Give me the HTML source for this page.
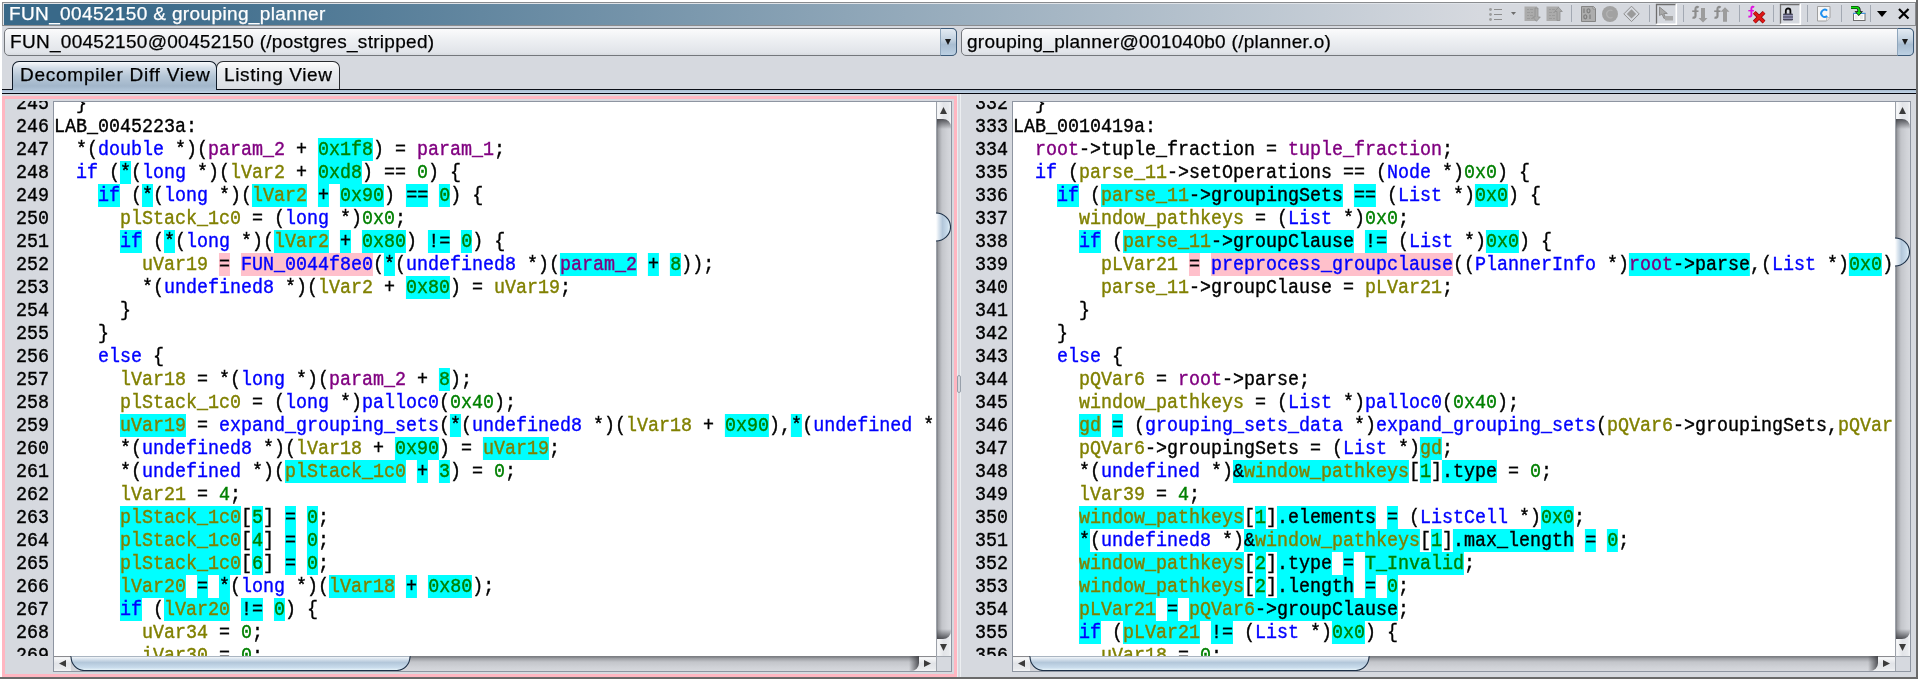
<!DOCTYPE html>
<html><head><meta charset="utf-8">
<style>
*{box-sizing:border-box;margin:0;padding:0}
html,body{width:1918px;height:679px;overflow:hidden;background:#d6d9df;position:relative}
.a{position:absolute;will-change:transform}
.sans{font-family:"Liberation Sans",sans-serif}
.mono{font-family:"Liberation Mono",monospace;-webkit-text-stroke:0.4px}
/* frame */
#wtop{left:0;top:0;width:1916px;height:2px;background:#fff}
#wleft{left:0;top:0;width:2px;height:679px;background:#fff}
#wright{left:1916px;top:0;width:2px;height:679px;background:#6a6a6a}
#wbot{left:0;top:677px;width:1918px;height:2px;background:#6a6a6a}
/* title */
#title{left:2px;top:2px;width:1914px;height:24px;border:1px solid #8a8c8f;box-shadow:inset 1px 1px 0 #dfe3e8;
  background:linear-gradient(to right,#396989 0px,#396989 113px,#d6d9df 1477px,#d6d9df 100%)}
#title .t{left:5.6px;top:0px;font-size:19px;line-height:22px;color:#fff;letter-spacing:0.37px;white-space:pre;-webkit-text-stroke:0.25px #fff}
/* combos */
.combo{top:28px;height:28px;border:1px solid #74777c;border-radius:5px;
  background:linear-gradient(#fbfbfc,#eef0f3 40%,#e1e4e9 90%,#d8dbe0)}
.combo .t{left:4.5px;top:3px;-webkit-text-stroke:0.25px #000;font-size:19px;line-height:20px;color:#000;white-space:pre}
.combo .btn{right:-1px;top:-1px;width:17px;height:28px;border:1px solid #3c5a78;border-left-color:#8fa6bc;border-radius:0 5px 5px 0;
  background:linear-gradient(#e3ebf3,#c4d3e1 40%,#a8bdd1 60%,#bcd0e3)}
.combo .btn i{position:absolute;left:4px;top:10px;width:0;height:0;border-left:3.5px solid transparent;border-right:3.5px solid transparent;border-top:6px solid #1a1a1a}
/* tabs */
#tabline{left:2px;top:89px;width:1914px;height:1px;background:#0b0e16}
#tabband{left:2px;top:90px;width:1914px;height:3px;background:linear-gradient(#a9bcd0,#c2d5e8)}
#tabdark{left:2px;top:93px;width:1914px;height:1px;background:#06070f}
.tab{top:61px;height:29px;border:1px solid #0f1a28;border-bottom:none;border-radius:7px 7px 0 0}
#tab1{left:12px;width:205px;background:linear-gradient(#f7f9fb 0px,#d3dde8 6px,#b6c7d7 14px,#a2b6ca 24px,#b2c6da 29px)}
#tab2{left:216px;width:124px;border-color:#2a2c30;background:linear-gradient(#fdfdfd 0px,#eceef1 8px,#e0e3e8 20px,#d9dce1 28px);height:28px}
.tab .t{left:6.5px;top:3px;-webkit-text-stroke:0.25px #000;font-size:19px;line-height:20px;color:#000;white-space:pre}
/* panels */
.pink{left:2px;top:96px;width:955px;height:581px;border:3px solid #ffb6c1}
.sbox{top:101px;width:899px;height:571px;border:1px solid #8e95a1;background:#fff}
.ln{top:101px;width:46px;height:555px;overflow:hidden;font-size:18.33px;line-height:23px;text-align:right;color:#000}
.ln .in{position:absolute;right:0;top:-9px;width:100%;font-size:20px;transform:scaleX(0.916528);transform-origin:100% 0}
.ln .in div{height:23px}
.code{top:102px;width:881px;height:554px;overflow:hidden;font-size:18.33px;line-height:23px;color:#000;background:#fff;white-space:pre}
.code .in{position:absolute;left:0;top:-10px;font-size:20px;transform:scaleX(0.916528);transform-origin:0 0}
.code div{height:23px}
u{text-decoration:none;display:inline-block;height:23px;vertical-align:top}
u.h{background:#00ffff}
u.k{background:#ffc0cb}
i{font-style:normal}
i.b{color:#0000ff}
i.o{color:#808000}
i.p{color:#800080}
i.g{color:#008000}
/* scrollbars */
.vs{top:102px;width:15px;height:554px;background:linear-gradient(to right,#8d8f94,#b9bbc0 3px,#cfd1d6 8px,#d6d9df)}
.hs{top:656px;width:882px;height:15px;background:linear-gradient(#707276,#a9abb0 3px,#cdd0d5 8px,#d6d9df)}
.corner{top:656px;width:15px;height:15px;background:#d6d9df;border-left:1px solid #a3a8b0;border-top:1px solid #a3a8b0}
.thumbH{top:656px;height:15px;border:1px solid #1b2f48;border-radius:14px/8px;
  background:linear-gradient(#fafcfd,#c9d6e3 25%,#a8bdd1 50%,#c2d7ea 80%,#eaf7fc)}
.thumbV{width:15px;height:29px;border:1px solid #1b2f48;border-left:none;border-radius:0 15px 15px 0/0 14px 14px 0;
  background:linear-gradient(to right,#fafcfd,#c9d6e3 25%,#a8bdd1 50%,#c2d7ea 80%,#eaf7fc)}
.arr{background:linear-gradient(to right,#fbfbfc,#e4e6ea)}
.arrh{background:linear-gradient(#fbfbfc,#e4e6ea)}
.tri-up{width:0;height:0;border-left:4px solid transparent;border-right:4px solid transparent;border-bottom:7px solid #333}
.tri-dn{width:0;height:0;border-left:4px solid transparent;border-right:4px solid transparent;border-top:7px solid #333}
.tri-l{width:0;height:0;border-top:4px solid transparent;border-bottom:4px solid transparent;border-right:7px solid #333}
.tri-r{width:0;height:0;border-top:4px solid transparent;border-bottom:4px solid transparent;border-left:7px solid #333}
/* toolbar */
.sep{top:5px;width:1px;height:17px;background:#a3a9b3}
.tog{top:4px;width:21px;height:21px;border-top:1px solid #707070;border-left:1px solid #707070;border-right:2px solid #fff;border-bottom:2px solid #fff}
</style></head>
<body class="sans">
<div class="a" id="wtop"></div><div class="a" id="wleft"></div>
<div class="a" id="wright"></div><div class="a" id="wbot"></div>

<div class="a" id="title"><div class="a t">FUN_00452150 &amp; grouping_planner</div></div>

<!-- toolbar icons -->
<svg class="a" style="left:1480px;top:2px" width="436" height="24" viewBox="1480 2 436 24">
  <g fill="#9d9d9d"><circle cx="1490.5" cy="9.5" r="1.4"/><circle cx="1490.5" cy="14.5" r="1.4"/><circle cx="1490.5" cy="19.5" r="1.4"/></g>
  <g stroke="#8d8d8d" stroke-width="1"><path d="M1494 9.5h8M1494 14.5h8M1494 19.5h8"/></g>
  <path d="M1511 12h5l-2.5 3z" fill="#6d6d6d"/>
  <!-- doc down -->
  <rect x="1524.5" y="6.5" width="12.5" height="14.5" fill="#ababab"/>
  <g stroke="#999" stroke-width="0.9"><path d="M1527 9.5h2M1530 9.5h3M1527 12.5h3M1531 12.5h2M1527 15.5h2M1530 15.5h3M1527 18.5h3M1531 18.5h2"/></g>
  <path d="M1535 8h3v9h2.3l-3.8 4.3-3.8-4.3h2.3z" fill="#a9a9a9" stroke="#8f8f8f" stroke-width="0.8"/>
  <!-- doc up -->
  <rect x="1546.5" y="6.5" width="12.5" height="14.5" fill="#ababab"/>
  <g stroke="#999" stroke-width="0.9"><path d="M1549 9.5h2M1552 9.5h3M1549 12.5h3M1553 12.5h2M1549 15.5h2M1552 15.5h3M1549 18.5h3M1553 18.5h2"/></g>
  <path d="M1557 20.5v-9h-2.3l3.8-4.3 3.8 4.3h-2.3v9z" fill="#a9a9a9" stroke="#8f8f8f" stroke-width="0.8"/>
  <rect x="1571" y="5" width="1" height="17" fill="#a3a9b3"/>
  <!-- binary doc -->
  <path d="M1581.5 6.5h12l2 2v13h-14z" fill="#adadad" stroke="#858585" stroke-width="1"/>
  <path d="M1593 6.5v2.5h2.5" fill="#d0d0d0" stroke="#858585" stroke-width=".8"/>
  <g fill="none" stroke="#808080" stroke-width="1.3">
    <path d="M1584 8.5v4.5"/><ellipse cx="1588.5" cy="10.8" rx="1.5" ry="2"/>
    <ellipse cx="1585.3" cy="16.8" rx="1.5" ry="2"/><path d="M1590 14.5v4.5"/>
  </g>
  <!-- circle -->
  <circle cx="1610" cy="14" r="8" fill="#a2a2a2"/>
  <path d="M1612.5 10.8a3.8 3.8 0 1 0 0 6.4" stroke="#b2b2b2" stroke-width="1.3" fill="none"/>
  <!-- diamond -->
  <path d="M1631.5 6.2l7.7 7.7-7.7 7.7-7.7-7.7z" fill="none" stroke="#8e8e8e" stroke-width="1"/>
  <path d="M1631.5 9.2l4.7 4.7-4.7 4.7-4.7-4.7z" fill="#9a9a9a"/>
  <rect x="1649" y="5" width="1" height="17" fill="#a3a9b3"/>
  <!-- toggle cursor -->
  <rect x="1656" y="4" width="20" height="20" fill="#d6d9df"/>
  <path d="M1656.5 24v-19.5h19.5" stroke="#6e6e6e" stroke-width="1.3" fill="none"/>
  <path d="M1676.3 4v20.3h-20" stroke="#ffffff" stroke-width="1.6" fill="none"/>
  <path d="M1659.5 7v8.5l2.5-1.5 2 4.5 1.5-.8-1.7-4.2h3.5z" fill="#a8a8a8" stroke="#878787" stroke-width=".9"/>
  <rect x="1665" y="16" width="8" height="4.5" fill="#a8a8a8"/>
  <rect x="1683" y="5" width="1" height="17" fill="#a3a9b3"/>
  <!-- f down / f up -->
  <g fill="none" stroke="#8c8c8c">
    <path d="M1698.5 7.6c-1-1-3-1.2-3 1.4v7c0 1.5-1.3 2-3 1.5" stroke-width="2.2"/>
    <path d="M1692.2 11.2h6.3" stroke-width="1.6"/>
    <path d="M1720.5 7.6c-1-1-3-1.2-3 1.4v7c0 1.5-1.3 2-3 1.5" stroke-width="2.2"/>
    <path d="M1714.2 11.2h6.3" stroke-width="1.6"/>
  </g>
  <path d="M1701 8h4v10h2.5l-4.5 4.4-4.5-4.4h2.5z" fill="#9c9c9c"/>
  <path d="M1723 21.7v-10h-2.5l4.5-4.5 4.5 4.5h-2.5v10z" fill="#9c9c9c"/>
  <rect x="1739" y="5" width="1" height="17" fill="#a3a9b3"/>
  <!-- f x -->
  <g fill="none" stroke="#e010e0">
    <path d="M1754 7.3c-.8-.9-2.6-1-2.6 1.2v6.7c0 1.3-1.2 1.7-3 1.3" stroke-width="1.9"/>
    <path d="M1748.3 10.7h5.6" stroke-width="1.4"/>
  </g>
  <path d="M1754.3 12.3l9.7 9.7M1764 12.3l-9.7 9.7" stroke="#8a0a0a" stroke-width="4"/>
  <path d="M1754.3 12.3l9.7 9.7M1764 12.3l-9.7 9.7" stroke="#e01818" stroke-width="2.6"/>
  <rect x="1773" y="5" width="1" height="17" fill="#a3a9b3"/>
  <!-- toggle lock -->
  <rect x="1780" y="4" width="20" height="20" fill="#d6d9df"/>
  <path d="M1780.5 24v-19.5h19.5" stroke="#6e6e6e" stroke-width="1.3" fill="none"/>
  <path d="M1800.3 4v20.3h-20" stroke="#ffffff" stroke-width="1.6" fill="none"/>
  <path d="M1785.8 14v-3.2a2.3 2.3 0 0 1 4.6 0v3.2" stroke="#0a0a0a" stroke-width="1.8" fill="none"/>
  <rect x="1783" y="13.5" width="10" height="7" rx="1.2" fill="#4a4a5e"/>
  <path d="M1783 15.8h10M1783 18.2h10" stroke="#c0c0e8" stroke-width=".9"/>
  <rect x="1807" y="5" width="1" height="17" fill="#a3a9b3"/>
  <!-- C doc -->
  <path d="M1817.5 6.5h12.5v11l-3.5 3.5h-9z" fill="#f6f6f6" stroke="#a0a0a0" stroke-width="1"/>
  <path d="M1826.5 21v-3.5h3.5" fill="#e0e0e0" stroke="#b0b0b0" stroke-width=".7"/>
  <path d="M1827.2 10.6a3.6 3.6 0 1 0 0 5.4" stroke="#1e90f0" stroke-width="1.9" fill="none"/>
  <rect x="1841" y="5" width="1" height="17" fill="#a3a9b3"/>
  <!-- green arrow doc -->
  <rect x="1853.5" y="13.5" width="11.5" height="7" fill="#fcfcfc" stroke="#6e6e6e" stroke-width="1"/>
  <path d="M1853 13.3h12.5" stroke="#3a9cf0" stroke-width="1"/>
  <g stroke="#c8c8c8" stroke-width=".7"><path d="M1855 16h2.5M1860 16h3M1855 18h2.5M1860 18h3"/></g>
  <path d="M1851 7.5h5.5a2.5 2.5 0 0 1 2.5 2.5v1.5" stroke="#000" stroke-width="3.2" fill="none"/>
  <path d="M1854.5 11.3h8.5l-4.25 4.7z" fill="#000"/>
  <path d="M1851 7.5h5.5a2.5 2.5 0 0 1 2.5 2.5v2" stroke="#10e010" stroke-width="1.8" fill="none"/>
  <path d="M1856 12h5.5l-2.75 3.2z" fill="#10e010"/>
  <rect x="1870" y="5" width="1" height="17" fill="#a3a9b3"/>
  <!-- dropdown + close -->
  <path d="M1877 11h10l-5 6z" fill="#000"/>
  <path d="M1899 9l9.5 9.5M1908.5 9l-9.5 9.5" stroke="#000" stroke-width="2.2"/>
</svg>

<div class="a combo" style="left:4px;width:953px"><div class="a t" style="letter-spacing:0.29px">FUN_00452150@00452150 (/postgres_stripped)</div><div class="a btn"><i></i></div></div>
<div class="a combo" style="left:961px;width:953px"><div class="a t" style="letter-spacing:0.29px">grouping_planner@001040b0 (/planner.o)</div><div class="a btn"><i></i></div></div>

<div class="a" id="tabline"></div>
<div class="a" id="tabband"></div>
<div class="a" id="tabdark"></div>
<div class="a tab" id="tab2"><div class="a t" style="left:7.4px;letter-spacing:0.63px">Listing View</div></div>
<div class="a tab" id="tab1"><div class="a t" style="letter-spacing:0.74px">Decompiler Diff View</div></div>

<!-- LEFT PANEL -->
<div class="a pink"></div>
<div class="a sbox" style="left:53px"></div>
<div class="a ln mono" style="left:3px"><div class="in"><div>245</div>
<div>246</div>
<div>247</div>
<div>248</div>
<div>249</div>
<div>250</div>
<div>251</div>
<div>252</div>
<div>253</div>
<div>254</div>
<div>255</div>
<div>256</div>
<div>257</div>
<div>258</div>
<div>259</div>
<div>260</div>
<div>261</div>
<div>262</div>
<div>263</div>
<div>264</div>
<div>265</div>
<div>266</div>
<div>267</div>
<div>268</div>
<div>269</div></div></div>
<div class="a code mono" style="left:54px"><div class="in"><div>  }</div><div>LAB_0045223a:</div><div>  *(<i class="b">double</i> *)(<i class="p">param_2</i> + <u class="h"><i class="g">0x1f8</i></u>) = <i class="p">param_1</i>;</div><div>  <i class="b">if</i> (<u class="h">*</u>(<i class="b">long</i> *)(<i class="o">lVar2</i> + <u class="h"><i class="g">0xd8</i></u>) == <i class="g">0</i>) {</div><div>    <u class="h"><i class="b">if</i></u> (<u class="h">*</u>(<i class="b">long</i> *)(<u class="h"><i class="o">lVar2</i></u> <u class="h">+</u> <u class="h"><i class="g">0x90</i></u>) <u class="h">==</u> <u class="h"><i class="g">0</i></u>) {</div><div>      <i class="o">plStack_1c0</i> = (<i class="b">long</i> *)<i class="g">0x0</i>;</div><div>      <u class="h"><i class="b">if</i></u> (<u class="h">*</u>(<i class="b">long</i> *)(<u class="h"><i class="o">lVar2</i></u> <u class="h">+</u> <u class="h"><i class="g">0x80</i></u>) <u class="h">!=</u> <u class="h"><i class="g">0</i></u>) {</div><div>        <i class="o">uVar19</i> <u class="k">=</u> <u class="k"><i class="b">FUN_0044f8e0</i></u>(<u class="h">*</u>(<i class="b">undefined8</i> *)(<u class="h"><i class="p">param_2</i></u> <u class="h">+</u> <u class="h"><i class="g">8</i></u>));</div><div>        *(<i class="b">undefined8</i> *)(<i class="o">lVar2</i> + <u class="h"><i class="g">0x80</i></u>) = <i class="o">uVar19</i>;</div><div>      }</div><div>    }</div><div>    <i class="b">else</i> {</div><div>      <i class="o">lVar18</i> = *(<i class="b">long</i> *)(<i class="p">param_2</i> + <u class="h"><i class="g">8</i></u>);</div><div>      <i class="o">plStack_1c0</i> = (<i class="b">long</i> *)<i class="b">palloc0</i>(<i class="g">0x40</i>);</div><div>      <u class="h"><i class="o">uVar19</i></u> = <i class="b">expand_grouping_sets</i>(<u class="h">*</u>(<i class="b">undefined8</i> *)(<i class="o">lVar18</i> + <u class="h"><i class="g">0x90</i></u>),<u class="h">*</u>(<i class="b">undefined</i> *)(<i class="o">lVar18</i> + <i class="g">0x80</i>));</div><div>      *(<i class="b">undefined8</i> *)(<i class="o">lVar18</i> + <u class="h"><i class="g">0x90</i></u>) = <u class="h"><i class="o">uVar19</i></u>;</div><div>      *(<i class="b">undefined</i> *)(<u class="h"><i class="o">plStack_1c0</i></u> <u class="h">+</u> <u class="h"><i class="g">3</i></u>) = <i class="g">0</i>;</div><div>      <i class="o">lVar21</i> = <i class="g">4</i>;</div><div>      <u class="h"><i class="o">plStack_1c0</i></u>[<u class="h"><i class="g">5</i></u>] <u class="h">=</u> <u class="h"><i class="g">0</i></u>;</div><div>      <u class="h"><i class="o">plStack_1c0</i></u>[<u class="h"><i class="g">4</i></u>] <u class="h">=</u> <u class="h"><i class="g">0</i></u>;</div><div>      <u class="h"><i class="o">plStack_1c0</i></u>[<u class="h"><i class="g">6</i></u>] <u class="h">=</u> <u class="h"><i class="g">0</i></u>;</div><div>      <u class="h"><i class="o">lVar20</i></u> <u class="h">=</u> <u class="h">*</u>(<i class="b">long</i> *)(<u class="h"><i class="o">lVar18</i></u> <u class="h">+</u> <u class="h"><i class="g">0x80</i></u>);</div><div>      <u class="h"><i class="b">if</i></u> (<u class="h"><i class="o">lVar20</i></u> <u class="h">!=</u> <u class="h"><i class="g">0</i></u>) {</div><div>        <i class="o">uVar34</i> = <i class="g">0</i>;</div><div>        <i class="o">iVar30</i> = <i class="g">0</i>;</div></div></div>
<svg class="a" style="left:936px;top:102px" width="15" height="554" viewBox="0 0 15 554">
<defs>
<linearGradient id="vtL" x1="0" x2="1" y1="0" y2="0"><stop offset="0" stop-color="#616368"/><stop offset=".15" stop-color="#9b9da2"/><stop offset=".4" stop-color="#c3c5ca"/><stop offset=".75" stop-color="#d0d2d7"/><stop offset="1" stop-color="#d6d8dd"/></linearGradient>
<linearGradient id="vttL" x1="0" x2="0" y1="0" y2="1"><stop offset="0" stop-color="#3c3d42" stop-opacity=".85"/><stop offset="1" stop-color="#3c3d42" stop-opacity="0"/></linearGradient>
<linearGradient id="vtbL" x1="0" x2="0" y1="1" y2="0"><stop offset="0" stop-color="#3c3d42" stop-opacity=".85"/><stop offset="1" stop-color="#3c3d42" stop-opacity="0"/></linearGradient>
<linearGradient id="vbL" x1="0" x2="1" y1="0" y2="0"><stop offset="0" stop-color="#e9eaed"/><stop offset=".15" stop-color="#f6f7f8"/><stop offset=".5" stop-color="#e2e4e8"/><stop offset=".85" stop-color="#e8eaed"/><stop offset="1" stop-color="#f4f5f7"/></linearGradient>
<linearGradient id="vthL" x1="0" x2="1" y1="0" y2="0"><stop offset="0" stop-color="#ffffff"/><stop offset=".2" stop-color="#d9e4ee"/><stop offset=".45" stop-color="#b3c7da"/><stop offset=".8" stop-color="#c9dcec"/><stop offset="1" stop-color="#ecf8fc"/></linearGradient>
</defs>
<rect x="0" y="0" width="15" height="554" fill="url(#vtL)"/>
<rect x="0" y="17" width="15" height="10" fill="url(#vttL)"/>
<rect x="0" y="527" width="15" height="10" fill="url(#vtbL)"/>
<path d="M0 0H15V25A8 8 0 0 0 7 17H0Z" fill="url(#vbL)"/>
<path d="M0 554H15V529A8 8 0 0 1 7 537H0Z" fill="url(#vbL)"/>
<path d="M4 12L7.5 5L11 12Z" fill="#3b3b3b"/>
<rect x="0" y="0" width="1" height="554" fill="#9ca1a9"/>
<path d="M4 542L11 542L7.5 549Z" fill="#3b3b3b"/>
<path d="M0 111A14.5 14 0 0 1 0 139Z" fill="url(#vthL)"/>
<path d="M0 111A14.5 14 0 0 1 0 139" fill="none" stroke="#1d3047" stroke-width="1.1"/>
</svg><svg class="a" style="left:54px;top:656px" width="882" height="15" viewBox="0 0 882 15">
<defs>
<linearGradient id="htL" x1="0" x2="0" y1="0" y2="1"><stop offset="0" stop-color="#616368"/><stop offset=".15" stop-color="#9b9da2"/><stop offset=".4" stop-color="#c3c5ca"/><stop offset=".75" stop-color="#d0d2d7"/><stop offset="1" stop-color="#d6d8dd"/></linearGradient>
<linearGradient id="htrL" x1="1" x2="0" y1="0" y2="0"><stop offset="0" stop-color="#3c3d42" stop-opacity=".85"/><stop offset="1" stop-color="#3c3d42" stop-opacity="0"/></linearGradient>
<linearGradient id="hbL" x1="0" x2="0" y1="0" y2="1"><stop offset="0" stop-color="#e9eaed"/><stop offset=".15" stop-color="#f6f7f8"/><stop offset=".5" stop-color="#e2e4e8"/><stop offset=".85" stop-color="#e8eaed"/><stop offset="1" stop-color="#f4f5f7"/></linearGradient>
<linearGradient id="hthL" x1="0" x2="0" y1="0" y2="1"><stop offset="0" stop-color="#ffffff"/><stop offset=".2" stop-color="#d9e4ee"/><stop offset=".45" stop-color="#b3c7da"/><stop offset=".8" stop-color="#c9dcec"/><stop offset="1" stop-color="#ecf8fc"/></linearGradient>
</defs>
<rect x="0" y="0" width="882" height="15" fill="url(#htL)"/>
<rect x="0" y="0" width="882" height="1" fill="#7d7f84"/>
<rect x="855" y="0" width="10" height="15" fill="url(#htrL)"/>
<path d="M0 0H17V15H0Z" fill="url(#hbL)"/>
<path d="M882 0H865V7A8 8 0 0 1 857 15H882Z" fill="url(#hbL)"/>
<rect x="0" y="0" width="17" height="1" fill="#8a8b8f"/>
<rect x="865" y="0" width="17" height="1" fill="#8a8b8f"/>
<path d="M12 4L12 11L5 7.5Z" fill="#3b3b3b"/>
<path d="M870 4L870 11L877 7.5Z" fill="#3b3b3b"/>
<path d="M17 0H356A13 14 0 0 1 343 14.5H30A13 14 0 0 1 17 0Z" fill="url(#hthL)"/>
<rect x="18" y="0" width="337" height="1" fill="#aab5c1"/>
<path d="M356 0A13 14 0 0 1 343 14.5H30A13 14 0 0 1 17 0" fill="none" stroke="#1d3047" stroke-width="1.1"/>
</svg>
<div class="a corner" style="left:936px"></div>

<!-- divider -->
<div class="a" style="left:957px;top:94px;width:1px;height:583px;background:#eceef1"></div>
<div class="a" style="left:960px;top:94px;width:1px;height:583px;background:#eceef1"></div>
<div class="a" style="left:957px;top:375px;width:4px;height:18px;border:1px solid #98a0ab;border-radius:2px;background:#d6d9df"></div>

<!-- RIGHT PANEL -->
<div class="a sbox" style="left:1012px"></div>
<div class="a ln mono" style="left:962px"><div class="in"><div>332</div>
<div>333</div>
<div>334</div>
<div>335</div>
<div>336</div>
<div>337</div>
<div>338</div>
<div>339</div>
<div>340</div>
<div>341</div>
<div>342</div>
<div>343</div>
<div>344</div>
<div>345</div>
<div>346</div>
<div>347</div>
<div>348</div>
<div>349</div>
<div>350</div>
<div>351</div>
<div>352</div>
<div>353</div>
<div>354</div>
<div>355</div>
<div>356</div></div></div>
<div class="a code mono" style="left:1013px"><div class="in"><div>  }</div><div>LAB_0010419a:</div><div>  <i class="p">root</i>-&gt;tuple_fraction = <i class="p">tuple_fraction</i>;</div><div>  <i class="b">if</i> (<i class="o">parse_11</i>-&gt;setOperations == (<i class="b">Node</i> *)<i class="g">0x0</i>) {</div><div>    <u class="h"><i class="b">if</i></u> (<u class="h"><i class="o">parse_11</i>-&gt;groupingSets</u> <u class="h">==</u> (<i class="b">List</i> *)<u class="h"><i class="g">0x0</i></u>) {</div><div>      <i class="o">window_pathkeys</i> = (<i class="b">List</i> *)<i class="g">0x0</i>;</div><div>      <u class="h"><i class="b">if</i></u> (<u class="h"><i class="o">parse_11</i>-&gt;groupClause</u> <u class="h">!=</u> (<i class="b">List</i> *)<u class="h"><i class="g">0x0</i></u>) {</div><div>        <i class="o">pLVar21</i> <u class="k">=</u> <u class="k"><i class="b">preprocess_groupclause</i></u>((<i class="b">PlannerInfo</i> *)<u class="h"><i class="p">root</i>-&gt;parse</u>,(<i class="b">List</i> *)<u class="h"><i class="g">0x0</i></u>);</div><div>        <i class="o">parse_11</i>-&gt;groupClause = <i class="o">pLVar21</i>;</div><div>      }</div><div>    }</div><div>    <i class="b">else</i> {</div><div>      <i class="o">pQVar6</i> = <i class="p">root</i>-&gt;parse;</div><div>      <i class="o">window_pathkeys</i> = (<i class="b">List</i> *)<i class="b">palloc0</i>(<i class="g">0x40</i>);</div><div>      <u class="h"><i class="o">gd</i></u> <u class="h">=</u> (<i class="b">grouping_sets_data</i> *)<i class="b">expand_grouping_sets</i>(<i class="o">pQVar6</i>-&gt;groupingSets,<i class="o">pQVar6</i>-&gt;groupClause);</div><div>      <i class="o">pQVar6</i>-&gt;groupingSets = (<i class="b">List</i> *)<u class="h"><i class="o">gd</i></u>;</div><div>      *(<i class="b">undefined</i> *)<u class="h">&amp;<i class="o">window_pathkeys</i></u>[<u class="h"><i class="g">1</i></u>]<u class="h">.type</u> = <i class="g">0</i>;</div><div>      <i class="o">lVar39</i> = <i class="g">4</i>;</div><div>      <u class="h"><i class="o">window_pathkeys</i></u>[<u class="h"><i class="g">1</i></u>]<u class="h">.elements</u> <u class="h">=</u> (<i class="b">ListCell</i> *)<u class="h"><i class="g">0x0</i></u>;</div><div>      <u class="h">*</u>(<i class="b">undefined8</i> *)<u class="h">&amp;<i class="o">window_pathkeys</i></u>[<u class="h"><i class="g">1</i></u>]<u class="h">.max_length</u> <u class="h">=</u> <u class="h"><i class="g">0</i></u>;</div><div>      <u class="h"><i class="o">window_pathkeys</i></u>[<u class="h"><i class="g">2</i></u>]<u class="h">.type</u> <u class="h">=</u> <u class="h"><i class="g">T_Invalid</i></u>;</div><div>      <u class="h"><i class="o">window_pathkeys</i></u>[<u class="h"><i class="g">2</i></u>]<u class="h">.length</u> <u class="h">=</u> <u class="h"><i class="g">0</i></u>;</div><div>      <u class="h"><i class="o">pLVar21</i></u> <u class="h">=</u> <u class="h"><i class="o">pQVar6</i>-&gt;groupClause</u>;</div><div>      <u class="h"><i class="b">if</i></u> (<u class="h"><i class="o">pLVar21</i></u> <u class="h">!=</u> (<i class="b">List</i> *)<u class="h"><i class="g">0x0</i></u>) {</div><div>        <i class="o">uVar18</i> = <i class="g">0</i>;</div></div></div>
<svg class="a" style="left:1895px;top:102px" width="15" height="554" viewBox="0 0 15 554">
<defs>
<linearGradient id="vtR" x1="0" x2="1" y1="0" y2="0"><stop offset="0" stop-color="#616368"/><stop offset=".15" stop-color="#9b9da2"/><stop offset=".4" stop-color="#c3c5ca"/><stop offset=".75" stop-color="#d0d2d7"/><stop offset="1" stop-color="#d6d8dd"/></linearGradient>
<linearGradient id="vttR" x1="0" x2="0" y1="0" y2="1"><stop offset="0" stop-color="#3c3d42" stop-opacity=".85"/><stop offset="1" stop-color="#3c3d42" stop-opacity="0"/></linearGradient>
<linearGradient id="vtbR" x1="0" x2="0" y1="1" y2="0"><stop offset="0" stop-color="#3c3d42" stop-opacity=".85"/><stop offset="1" stop-color="#3c3d42" stop-opacity="0"/></linearGradient>
<linearGradient id="vbR" x1="0" x2="1" y1="0" y2="0"><stop offset="0" stop-color="#e9eaed"/><stop offset=".15" stop-color="#f6f7f8"/><stop offset=".5" stop-color="#e2e4e8"/><stop offset=".85" stop-color="#e8eaed"/><stop offset="1" stop-color="#f4f5f7"/></linearGradient>
<linearGradient id="vthR" x1="0" x2="1" y1="0" y2="0"><stop offset="0" stop-color="#ffffff"/><stop offset=".2" stop-color="#d9e4ee"/><stop offset=".45" stop-color="#b3c7da"/><stop offset=".8" stop-color="#c9dcec"/><stop offset="1" stop-color="#ecf8fc"/></linearGradient>
</defs>
<rect x="0" y="0" width="15" height="554" fill="url(#vtR)"/>
<rect x="0" y="17" width="15" height="10" fill="url(#vttR)"/>
<rect x="0" y="527" width="15" height="10" fill="url(#vtbR)"/>
<path d="M0 0H15V25A8 8 0 0 0 7 17H0Z" fill="url(#vbR)"/>
<path d="M0 554H15V529A8 8 0 0 1 7 537H0Z" fill="url(#vbR)"/>
<path d="M4 12L7.5 5L11 12Z" fill="#3b3b3b"/>
<rect x="0" y="0" width="1" height="554" fill="#9ca1a9"/>
<path d="M4 542L11 542L7.5 549Z" fill="#3b3b3b"/>
<path d="M0 136A14.5 14 0 0 1 0 164Z" fill="url(#vthR)"/>
<path d="M0 136A14.5 14 0 0 1 0 164" fill="none" stroke="#1d3047" stroke-width="1.1"/>
</svg><svg class="a" style="left:1013px;top:656px" width="882" height="15" viewBox="0 0 882 15">
<defs>
<linearGradient id="htR" x1="0" x2="0" y1="0" y2="1"><stop offset="0" stop-color="#616368"/><stop offset=".15" stop-color="#9b9da2"/><stop offset=".4" stop-color="#c3c5ca"/><stop offset=".75" stop-color="#d0d2d7"/><stop offset="1" stop-color="#d6d8dd"/></linearGradient>
<linearGradient id="htrR" x1="1" x2="0" y1="0" y2="0"><stop offset="0" stop-color="#3c3d42" stop-opacity=".85"/><stop offset="1" stop-color="#3c3d42" stop-opacity="0"/></linearGradient>
<linearGradient id="hbR" x1="0" x2="0" y1="0" y2="1"><stop offset="0" stop-color="#e9eaed"/><stop offset=".15" stop-color="#f6f7f8"/><stop offset=".5" stop-color="#e2e4e8"/><stop offset=".85" stop-color="#e8eaed"/><stop offset="1" stop-color="#f4f5f7"/></linearGradient>
<linearGradient id="hthR" x1="0" x2="0" y1="0" y2="1"><stop offset="0" stop-color="#ffffff"/><stop offset=".2" stop-color="#d9e4ee"/><stop offset=".45" stop-color="#b3c7da"/><stop offset=".8" stop-color="#c9dcec"/><stop offset="1" stop-color="#ecf8fc"/></linearGradient>
</defs>
<rect x="0" y="0" width="882" height="15" fill="url(#htR)"/>
<rect x="0" y="0" width="882" height="1" fill="#7d7f84"/>
<rect x="855" y="0" width="10" height="15" fill="url(#htrR)"/>
<path d="M0 0H17V15H0Z" fill="url(#hbR)"/>
<path d="M882 0H865V7A8 8 0 0 1 857 15H882Z" fill="url(#hbR)"/>
<rect x="0" y="0" width="17" height="1" fill="#8a8b8f"/>
<rect x="865" y="0" width="17" height="1" fill="#8a8b8f"/>
<path d="M12 4L12 11L5 7.5Z" fill="#3b3b3b"/>
<path d="M870 4L870 11L877 7.5Z" fill="#3b3b3b"/>
<path d="M17 0H356A13 14 0 0 1 343 14.5H30A13 14 0 0 1 17 0Z" fill="url(#hthR)"/>
<rect x="18" y="0" width="337" height="1" fill="#aab5c1"/>
<path d="M356 0A13 14 0 0 1 343 14.5H30A13 14 0 0 1 17 0" fill="none" stroke="#1d3047" stroke-width="1.1"/>
</svg>
<div class="a corner" style="left:1895px"></div>

</body></html>
